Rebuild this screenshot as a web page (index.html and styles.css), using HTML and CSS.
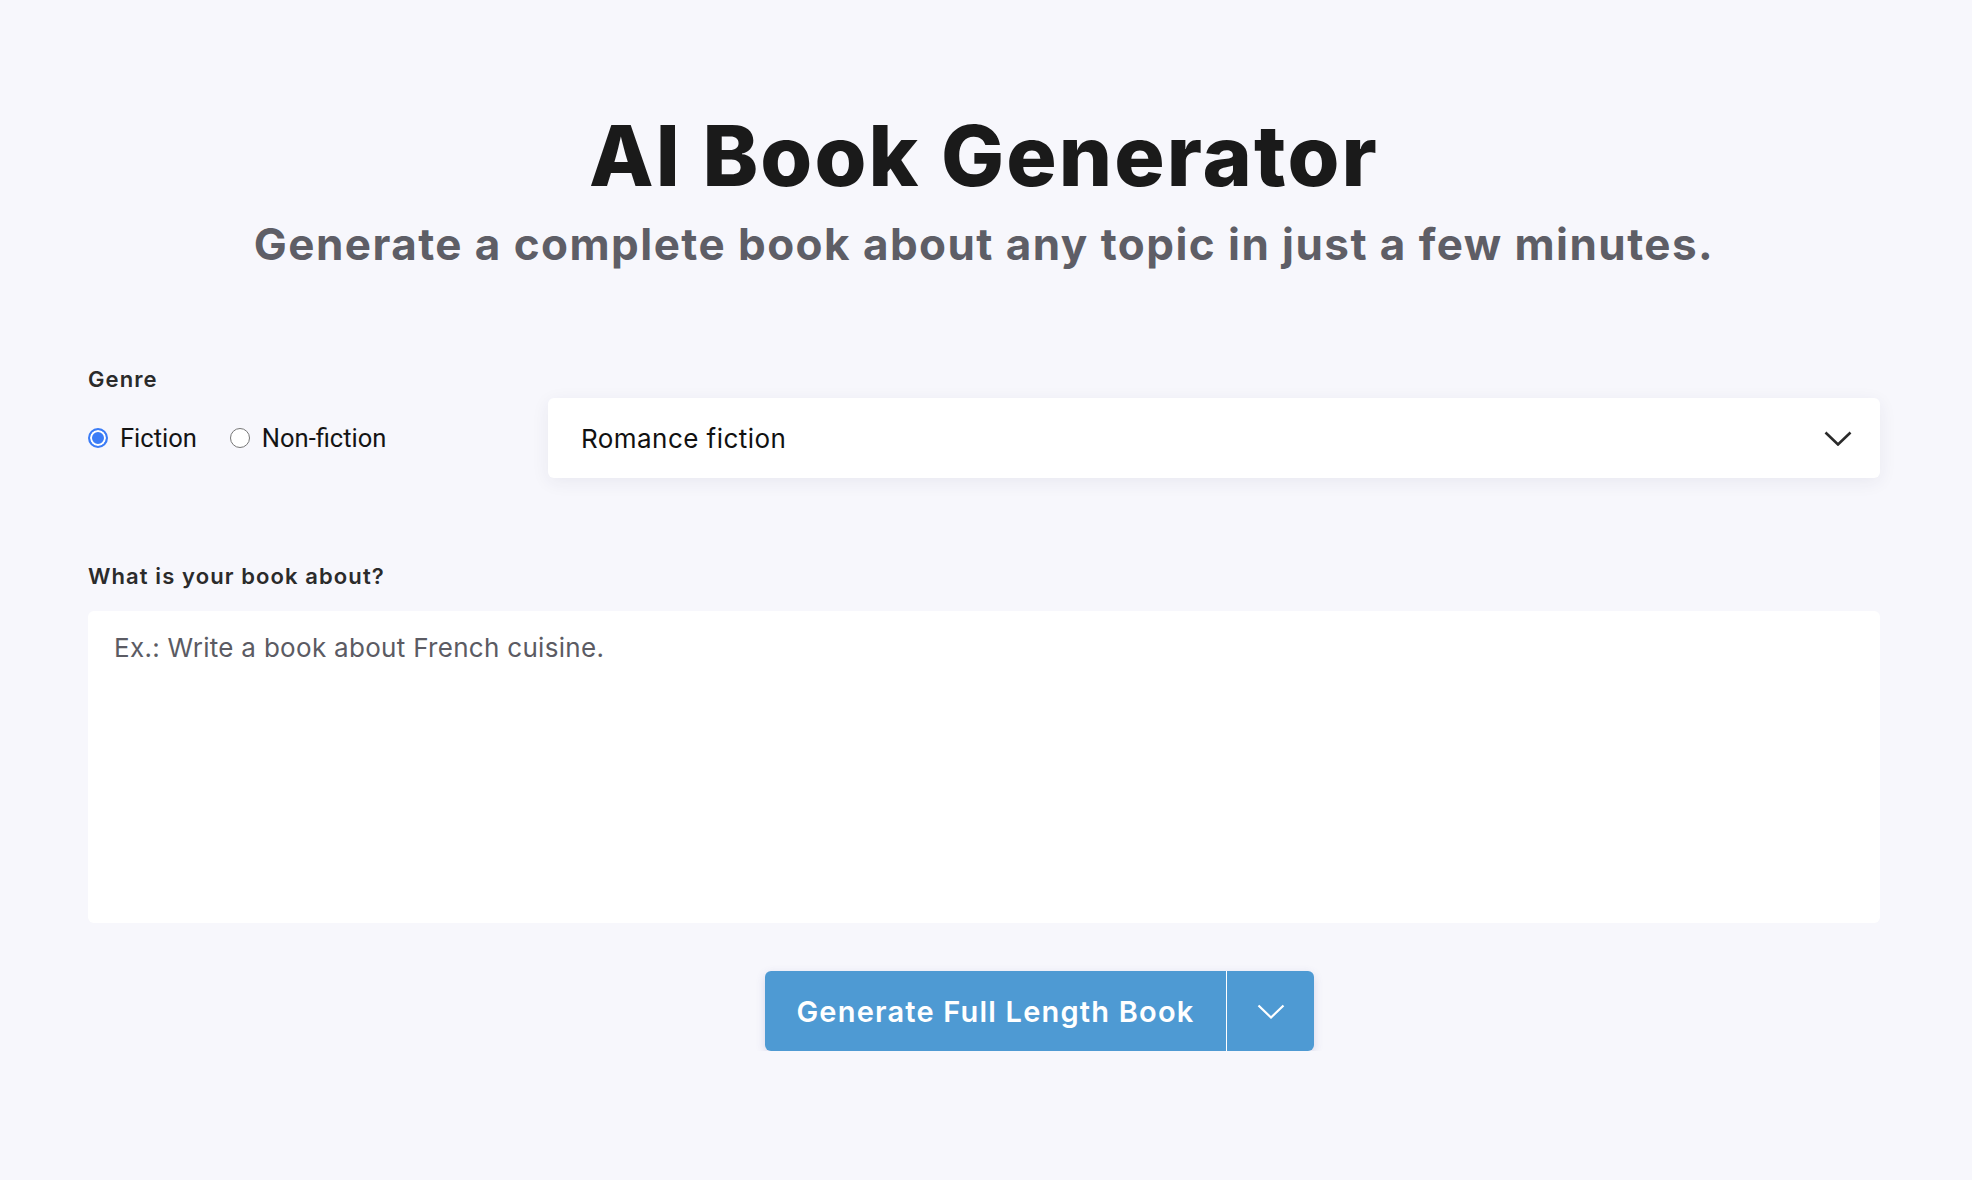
FILE: index.html
```html
<!DOCTYPE html>
<html lang="en">
<head>
<meta charset="utf-8">
<title>AI Book Generator</title>
<link rel="stylesheet" href="styles.css">
</head>
<body>
<main class="page">
  <header class="hero">
    <h1 class="title">AI Book Generator</h1>
    <p class="subtitle">Generate a complete book about any topic in just a few minutes.</p>
  </header>

  <section class="genre">
    <div class="genre-left">
      <div class="label">Genre</div>
      <div class="radios">
        <label class="radio-opt"><input type="radio" name="genre" checked><span>Fiction</span></label>
        <label class="radio-opt"><input type="radio" name="genre"><span>Non-fiction</span></label>
      </div>
    </div>
    <div class="select">
      <span>Romance fiction</span>
      <svg class="chev" width="28" height="15" viewBox="0 0 28 15"><polyline points="1.5,1.5 14,13.5 26.5,1.5" fill="none" stroke="#2a2a2a" stroke-width="2.6"/></svg>
    </div>
  </section>

  <section class="about">
    <label class="label" for="topic">What is your book about?</label>
    <textarea id="topic" placeholder="Ex.: Write a book about French cuisine."></textarea>
  </section>

  <div class="actions">
    <div class="btn-group">
      <button class="btn-main" type="button">Generate Full Length Book</button>
      <button class="btn-toggle" type="button" aria-label="More options">
        <svg width="28" height="15" viewBox="0 0 28 15"><polyline points="1.5,1.5 14,13.5 26.5,1.5" fill="none" stroke="#ffffff" stroke-width="2.2"/></svg>
      </button>
    </div>
  </div>
</main>
</body>
</html>
```

FILE: styles.css
```css
body {
  margin: 0;
  background: #F7F7FC;
  font-family: Inter, "Liberation Sans", sans-serif;
  color: #1a1a1a;
}

.page {
  padding: 106px 92px 0 88px;
}

.hero {
  text-align: center;
}

.title {
  margin: 0;
  font-size: 84px;
  line-height: 100px;
  font-weight: 800;
  letter-spacing: 2.1px;
  color: #1a1a1a;
}

.subtitle {
  margin: 12px 0 0;
  font-size: 44px;
  line-height: 52px;
  font-weight: 700;
  letter-spacing: 1.45px;
  color: #5E5E66;
}

.genre {
  display: flex;
  align-items: flex-end;
  margin-top: 97px;
}

.genre-left {
  width: 460px;
  flex: none;
}

.label {
  display: block;
  font-size: 22px;
  line-height: 25px;
  font-weight: 600;
  letter-spacing: 1.1px;
  color: #2b2b2b;
}

.radios {
  display: flex;
  align-items: center;
  height: 80px;
  margin-top: 6px;
  gap: 33px;
}

.radio-opt {
  display: flex;
  align-items: center;
  gap: 12px;
  font-family: Roboto, "Liberation Sans", sans-serif;
  font-size: 25.5px;
  color: #141414;
}

.radio-opt input {
  appearance: none;
  -webkit-appearance: none;
  margin: 0;
  width: 20px;
  height: 20px;
  box-sizing: border-box;
  border-radius: 50%;
  border: 1px solid #767676;
  background: #fff;
}

.radio-opt input:checked {
  border: 2px solid #3B7CF6;
  background: #3B7CF6;
  box-shadow: inset 0 0 0 2px #fff;
}

.select {
  flex: 1;
  height: 80px;
  box-sizing: border-box;
  background: #fff;
  border-radius: 6px;
  box-shadow: 0 4px 18px rgba(40, 40, 90, 0.07);
  display: flex;
  align-items: center;
  justify-content: space-between;
  padding: 0 28px 0 33px;
  font-size: 26px;
  letter-spacing: 0.45px;
  color: #111;
}

.about {
  margin-top: 86px;
}

.about textarea {
  display: block;
  margin-top: 22px;
  width: 100%;
  height: 312px;
  box-sizing: border-box;
  border: none;
  border-radius: 6px;
  background: #fff;
  padding: 19px 26px;
  font-family: Inter, "Liberation Sans", sans-serif;
  font-size: 26px;
  line-height: 36px;
  letter-spacing: 0.3px;
  color: #111;
  resize: none;
  outline: none;
}

.about textarea::placeholder {
  color: #5B5B63;
  opacity: 1;
}

.actions {
  display: flex;
  justify-content: center;
  margin-top: 48px;
  padding-left: 111px;
}

.btn-group {
  display: flex;
  height: 80px;
  border-radius: 6px;
  overflow: hidden;
  box-shadow: 0 3px 10px rgba(70, 70, 150, 0.18);
}

.btn-main {
  width: 462px;
  box-sizing: border-box;
  background: #4E9AD3;
  color: #fff;
  border: none;
  border-right: 1px solid #fff;
  font-family: Inter, "Liberation Sans", sans-serif;
  font-weight: 600;
  font-size: 29px;
  letter-spacing: 1.2px;
  padding: 0;
}

.btn-toggle {
  width: 87px;
  background: #4E9AD3;
  border: none;
  padding: 0;
  display: flex;
  align-items: center;
  justify-content: center;
}
```
